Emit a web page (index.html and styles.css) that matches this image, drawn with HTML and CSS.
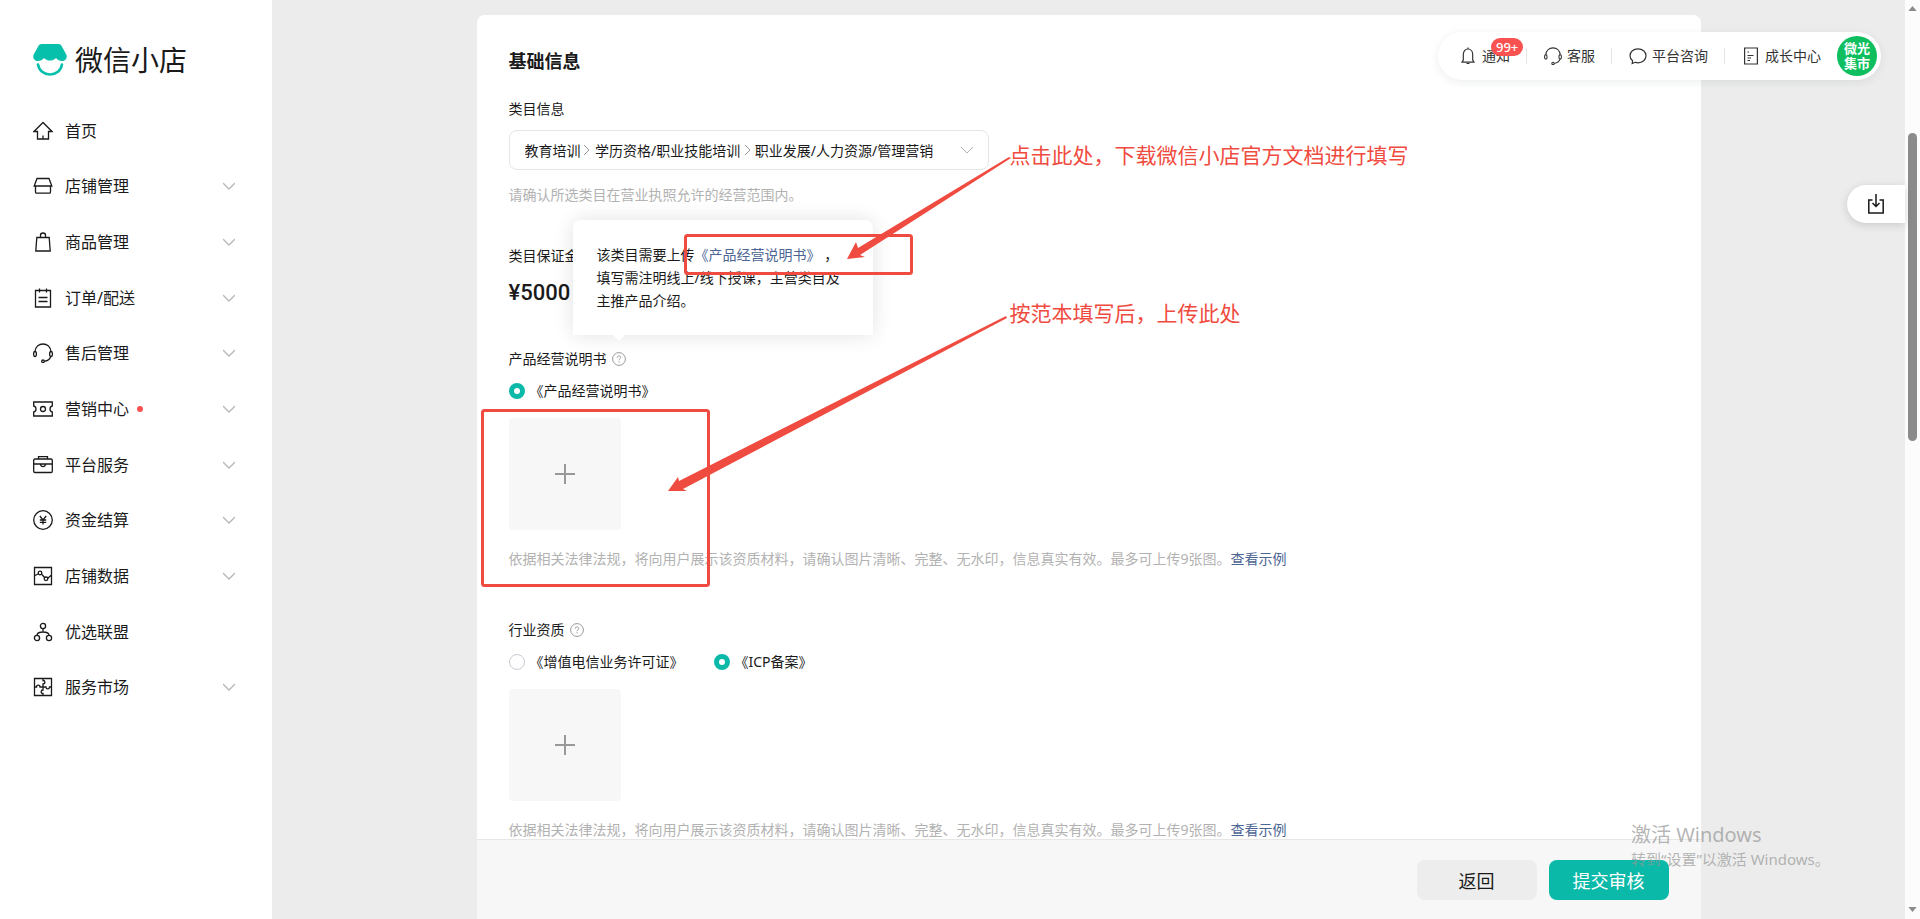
FILE: index.html
```html
<!DOCTYPE html>
<html lang="zh-CN">
<head>
    <meta charset="UTF-8">
    <title>微信小店</title>
    <link rel="stylesheet" href="styles.css">
</head>
<body>
    <div id="app">

        <aside id="sidebar">
            <a class="logo" href="#">
                <svg width="34" height="32" viewBox="0 0 34 32">
                    <path d="M8.500 0h17c1.400 0 2.500.8 3.100 2l4.700 8.500c1.400 3-.6 6.500-4.300 6.500-2.500 0-4.500-1.200-6-3-1.300 1.400-3.500 2.600-6 2.600s-4.700-1.200-6-2.600c-1.500 1.800-3.500 3-6 3C1.300 17-.7 13.500.7 10.500L5.400 2c.6-1.200 1.700-2 3.100-2z" fill="#07c0ab"/>
                    <path d="M5 20.500c1 6 6 10 12 10s11-4 12-10" fill="none" stroke="#07c0ab" stroke-width="2.600" stroke-linecap="round"/>
                </svg>
                <span>微信小店</span>
            </a>

            <ul class="menu">
                <li><a href="#">
                    <svg class="icon" viewBox="0 0 20 20"><path d="M10 1.500L1 10.500h3.500V18h11v-7.500H19zM10 14.500V18"/></svg>
                    首页
                </a></li>
                <li><a href="#">
                    <svg class="icon" viewBox="0 0 20 20"><path d="M4 2.500h12l2.800 7.500H1.200zM2.500 10v6c0 .8.4 1.200 1.200 1.200h12.600c.8 0 1.200-.4 1.200-1.200v-6"/></svg>
                    店铺管理
                    <svg class="arrow" viewBox="0 0 12 8"><path d="M0 1l6 6 6-6"/></svg>
                </a></li>
                <li><a href="#">
                    <svg class="icon" viewBox="0 0 20 20"><path d="M3.800 5.500h12.400l1 13.500H2.800zM7.500 5.500V3.200c0-1.300 1-2.200 2.500-2.200s2.500.9 2.500 2.200v2.300"/></svg>
                    商品管理
                    <svg class="arrow" viewBox="0 0 12 8"><path d="M0 1l6 6 6-6"/></svg>
                </a></li>
                <li><a href="#">
                    <svg class="icon" viewBox="0 0 20 20"><path d="M2.500 2.500h15V19h-15zM6.500.5v4M13.500.5v4M5.500 9.500h9M5.500 13.500h9"/></svg>
                    订单/配送
                    <svg class="arrow" viewBox="0 0 12 8"><path d="M0 1l6 6 6-6"/></svg>
                </a></li>
                <li><a href="#">
                    <svg class="icon" viewBox="0 0 20 20"><path d="M2 8.500C2.500 4 5.800 1 10 1s7.500 3 8 7.500M18 13c-1 3-3.500 5-6.500 5.200"/><ellipse cx="2" cy="11" rx="1.400" ry="2.500"/><ellipse cx="18" cy="11" rx="1.400" ry="2.500"/><circle cx="10" cy="18.300" r="1.300"/></svg>
                    售后管理
                    <svg class="arrow" viewBox="0 0 12 8"><path d="M0 1l6 6 6-6"/></svg>
                </a></li>
                <li><a href="#">
                    <svg class="icon" viewBox="0 0 20 20"><path d="M.7 3h18.600v4c-1.600.3-2.300 1.600-2.300 3s.7 2.700 2.300 3v4H.7v-4c1.600-.3 2.300-1.600 2.300-3S2.300 7.300.7 7z"/><circle cx="10" cy="10" r="2.500"/></svg>
                    营销中心
                    <i class="dot"></i>
                    <svg class="arrow" viewBox="0 0 12 8"><path d="M0 1l6 6 6-6"/></svg>
                </a></li>
                <li><a href="#">
                    <svg class="icon" viewBox="0 0 20 20"><path d="M5.500 4V1.700h9V4M2 4h16c.8 0 1.300.5 1.300 1.300v11c0 .8-.5 1.200-1.300 1.200H2c-.8 0-1.300-.4-1.300-1.200v-11C.7 4.500 1.200 4 2 4zM.7 9h18.600M7.500 9c.2 1.700 1.100 2.700 2.500 2.700s2.300-1 2.500-2.700"/></svg>
                    平台服务
                    <svg class="arrow" viewBox="0 0 12 8"><path d="M0 1l6 6 6-6"/></svg>
                </a></li>
                <li><a href="#">
                    <svg class="icon" viewBox="0 0 20 20"><circle cx="10" cy="10" r="9.300"/><path d="M6.800 6l3.200 4 3.200-4M10 10v4.500M6.800 10h6.400M6.800 12.300h6.400"/></svg>
                    资金结算
                    <svg class="arrow" viewBox="0 0 12 8"><path d="M0 1l6 6 6-6"/></svg>
                </a></li>
                <li><a href="#">
                    <svg class="icon" viewBox="0 0 20 20"><path d="M1.500 1.500h17v17h-17zM2 9.500l3-1.500M8.500 8l3.500 4M14.500 12.500l4-3.500"/><circle cx="7" cy="7" r="1.800"/><circle cx="13" cy="12.800" r="1.800"/></svg>
                    店铺数据
                    <svg class="arrow" viewBox="0 0 12 8"><path d="M0 1l6 6 6-6"/></svg>
                </a></li>
                <li><a href="#">
                    <svg class="icon" viewBox="0 0 20 20"><circle cx="10" cy="4" r="2.600"/><circle cx="4" cy="16" r="2.600"/><circle cx="16" cy="16" r="2.600"/><path d="M10 6.600V10M4 13.400c0-2 2.500-3.400 6-3.400s6 1.400 6 3.400"/></svg>
                    优选联盟
                </a></li>
                <li><a href="#">
                    <svg class="icon" viewBox="0 0 20 20"><path d="M1.500 1.500h17v17h-17zM10 1.500v2c2.500 0 2.500 3.500 0 3.500v3M18.500 10h-2c0 2.500-3.500 2.500-3.500 0h-3M10 18.500v-2c-2.500 0-2.500-3.500 0-3.500v-3M1.500 10h2c0-2.500 3.500-2.500 3.500 0h3"/></svg>
                    服务市场
                    <svg class="arrow" viewBox="0 0 12 8"><path d="M0 1l6 6 6-6"/></svg>
                </a></li>
            </ul>
        </aside>

        <main id="main">
            <form class="card">
                <div class="card-body">
                    <h2>基础信息</h2>

                    <div class="field">
                        <label class="label" for="category">类目信息</label>
                        <select id="category">
                            <option>教育培训&nbsp;&nbsp;&nbsp;&nbsp;学历资格/职业技能培训&nbsp;&nbsp;&nbsp;&nbsp;职业发展/人力资源/管理营销</option>
                        </select>
                        <p class="hint hint-select">请确认所选类目在营业执照允许的经营范围内。</p>
                    </div>

                    <div class="field">
                        <div class="label">类目保证金</div>
                        <div class="price">¥5000</div>
                    </div>

                    <div class="field field-upload">
                        <div class="label">
                            产品经营说明书
                            <span class="help">
                                <svg viewBox="0 0 14 14"><circle cx="7" cy="7" r="6.400"/><path d="M5.200 5.700c0-1.200.8-1.800 1.800-1.800s1.800.6 1.800 1.600c0 1.200-1.800 1.400-1.800 2.700M7 9.300v1.200"/></svg>
                                <span class="tooltip">该类目需要上传<a href="#">《产品经营说明书》</a>&nbsp;，填写需注明线上/线下授课，主营类目及主推产品介绍。</span>
                            </span>
                        </div>
                        <div class="radios">
                            <label><input type="radio" name="manual" checked>《产品经营说明书》</label>
                        </div>
                        <button type="button" class="upload" aria-label="上传产品经营说明书"><svg viewBox="0 0 20 20"><path d="M10 0v20M0 10h20"/></svg></button>
                        <p class="hint">依据相关法律法规，将向用户展示该资质材料，请确认图片清晰、完整、无水印，信息真实有效。最多可上传9张图。<a href="#">查看示例</a></p>
                    </div>

                    <div class="field field-upload">
                        <div class="label">
                            行业资质
                            <span class="help">
                                <svg viewBox="0 0 14 14"><circle cx="7" cy="7" r="6.400"/><path d="M5.200 5.700c0-1.200.8-1.800 1.800-1.800s1.800.6 1.800 1.600c0 1.200-1.800 1.400-1.800 2.700M7 9.300v1.200"/></svg>
                            </span>
                        </div>
                        <div class="radios">
                            <label><input type="radio" name="license">《增值电信业务许可证》</label>
                            <label><input type="radio" name="license" checked>《ICP备案》</label>
                        </div>
                        <button type="button" class="upload" aria-label="上传行业资质"><svg viewBox="0 0 20 20"><path d="M10 0v20M0 10h20"/></svg></button>
                        <p class="hint">依据相关法律法规，将向用户展示该资质材料，请确认图片清晰、完整、无水印，信息真实有效。最多可上传9张图。<a href="#">查看示例</a></p>
                    </div>
                </div>

                <div class="card-footer">
                    <button type="button" class="btn">返回</button>
                    <button type="button" class="btn btn-primary">提交审核</button>
                </div>

                <!-- 标注 -->
                <div class="notes">
                    <svg width="1224" height="600" viewBox="0 0 1224 600">
                        <rect x="208.500" y="220.500" width="226" height="38" rx="2"/>
                        <rect x="5.500" y="395.500" width="226" height="175" rx="2"/>
                        <polygon points="370,244 379,227 381,233 532,142 534,143 383,240 388,242"/>
                        <polygon points="191,476 201,462 202,466 529,301 530,303 206,474 210,476"/>
                    </svg>
                    <p class="note note-download">点击此处，下载微信小店官方文档进行填写</p>
                    <p class="note note-upload">按范本填写后，上传此处</p>
                </div>
            </form>

            <nav id="topbar">
                <a href="#">
                    <svg width="18" height="18" viewBox="-2 0 18 18"><path d="M1 15.200h12l-1.300-2.200V7.500C11.700 4.500 9.800 2 7 2S2.300 4.500 2.300 7.500V13zM7 2V.5M5.500 16.500h3"/></svg>
                    通知
                    <span class="badge">99+</span>
                </a>
                <a href="#">
                    <svg width="18" height="18" viewBox="0 0 20 20"><path d="M2 8.500C2.500 4 5.800 1 10 1s7.500 3 8 7.500M18 13c-1 3-3.500 5-6.500 5.200"/><ellipse cx="2" cy="11" rx="1.400" ry="2.500"/><ellipse cx="18" cy="11" rx="1.400" ry="2.500"/><circle cx="10" cy="18.300" r="1.300"/></svg>
                    客服
                </a>
                <a href="#">
                    <svg width="18" height="18" viewBox="0 0 18 18"><path d="M9 1.800c4.500 0 8 3 8 7s-3.500 7-8 7c-1 0-2-.2-2.900-.5L3.200 16.500l.4-2.700C2 12.500 1 10.800 1 8.800c0-4 3.500-7 8-7z"/></svg>
                    平台咨询
                </a>
                <a href="#">
                    <svg width="18" height="18" viewBox="-2 0 18 18"><path d="M.6 1h12.800v16H.6zM3.500 5h1.500M3.500 8.500h6M3.500 11h3.500M3.500 13.500h2.500"/></svg>
                    成长中心
                </a>
                <span class="avatar">微光<br>集市</span>
            </nav>

            <button type="button" id="download" aria-label="下载">
                <svg width="16" height="20" viewBox="0 0 16 20"><path d="M4.500 6H.8v13h14.400V6h-3.700M8 0v12M4.500 9L8 12.500 11.500 9"/></svg>
            </button>

            <div id="watermark">
                <p>激活 Windows</p>
                <p>转到“设置”以激活 Windows。</p>
            </div>
        </main>

        <div id="scrollbar">
            <svg viewBox="0 0 10 6"><path d="M5 0l5 6H0z"/></svg>
            <div class="track"><div class="thumb"></div></div>
            <svg viewBox="0 0 10 6"><path d="M5 6l5-6H0z"/></svg>
        </div>

    </div>
</body>
</html>
```
FILE: styles.css
```css
* {
    box-sizing: border-box;
}

body {
    margin: 0;
    font-family: "Noto Sans", "Noto Sans CJK SC", sans-serif;
    font-size: 14px;
    line-height: 22px;
    color: #1a1a1a;
    background-color: #ececec;
}

h2, p, ul {
    margin: 0;
    padding: 0;
}

a {
    color: #4c6593;
    text-decoration: none;
}

button, select, input {
    font-family: inherit;
    margin: 0;
}

svg {
    display: block;
    flex: none;
}

#app {
    display: flex;
    height: 100vh;
    overflow: hidden;
}

/* 左侧菜单 */
#sidebar {
    width: 272px;
    flex: none;
    background-color: #fff;
    padding: 40px 33px 0;
}

.logo {
    display: flex;
    align-items: center;
    gap: 8px;
    height: 40px;
    font-size: 28px;
    line-height: 40px;
    color: #1a1a1a;
}

.menu {
    display: flex;
    flex-direction: column;
    height: 612px;
    margin-top: 23px;
    list-style: none;
}

.menu li {
    flex: 1;
    display: flex;
}

.menu a {
    flex: 1;
    display: flex;
    align-items: center;
    gap: 12px;
    font-size: 16px;
    color: #1a1a1a;
}

.menu .icon {
    width: 20px;
    height: 20px;
    fill: none;
    stroke: #1a1a1a;
    stroke-width: 1.3;
}

.menu .arrow {
    width: 12px;
    height: 8px;
    margin-left: auto;
    margin-right: 4px;
    fill: none;
    stroke: #b8b8b8;
    stroke-width: 1.3;
}

.menu .dot {
    width: 6px;
    height: 6px;
    margin-left: -4px;
    border-radius: 50%;
    background-color: #fa5151;
}

/* 内容区 */
#main {
    position: relative;
    flex: 1;
    display: flex;
    justify-content: center;
    padding-top: 15px;
}

.card {
    position: relative;
    display: flex;
    flex-direction: column;
    width: 100%;
    max-width: 1224px;
    background-color: #fff;
    border-radius: 8px 8px 0 0;
}

.card-body {
    flex: 1;
    min-height: 0;
    overflow: hidden;
    padding: 30px 32px 0;
}

h2 {
    font-size: 18px;
    line-height: 32px;
    margin-bottom: 21px;
}

.field {
    margin-bottom: 39px;
}

.field-upload {
    margin-bottom: 49px;
}

.label {
    display: flex;
    align-items: center;
    gap: 5px;
    margin-bottom: 10px;
}

#category {
    display: block;
    width: 480px;
    height: 40px;
    padding: 0 15px;
    border: 1px solid #e5e5e5;
    border-radius: 8px;
    font-size: 14px;
    color: #1a1a1a;
    appearance: none;
    background-color: #fff;
    background-image:
        url("data:image/svg+xml,%3Csvg xmlns='http://www.w3.org/2000/svg' width='7' height='12'%3E%3Cpath d='M1 1l5 5-5 5' fill='none' stroke='%23999'/%3E%3C/svg%3E"),
        url("data:image/svg+xml,%3Csvg xmlns='http://www.w3.org/2000/svg' width='7' height='12'%3E%3Cpath d='M1 1l5 5-5 5' fill='none' stroke='%23999'/%3E%3C/svg%3E"),
        url("data:image/svg+xml,%3Csvg xmlns='http://www.w3.org/2000/svg' width='14' height='8'%3E%3Cpath d='M1 1l6 6 6-6' fill='none' stroke='%23b2b2b2'/%3E%3C/svg%3E");
    background-repeat: no-repeat;
    background-position: 73px center, 234px center, 450px center;
}

.hint {
    color: #b2b2b2;
    margin-top: 18px;
}

.hint-select {
    margin-top: 14px;
}

.price {
    font-family: Roboto, sans-serif;
    font-size: 22px;
    font-weight: 500;
    line-height: 32px;
}

.help {
    position: relative;
}

.help svg {
    width: 14px;
    height: 14px;
    fill: none;
    stroke: #999;
}

.tooltip {
    position: absolute;
    left: -39px;
    bottom: 31px;
    width: 300px;
    padding: 23px 24px;
    line-height: 23px;
    background-color: #fff;
    border-radius: 8px 8px 0 0;
    box-shadow: 0 0 20px rgba(0, 0, 0, 0.12);
}

.tooltip::after {
    content: "";
    position: absolute;
    left: 40px;
    top: 100%;
    border: 6px solid transparent;
    border-top-color: #fff;
    border-bottom: 0;
}

.radios {
    display: flex;
    gap: 30px;
    margin-bottom: 16px;
}

.radios label {
    display: flex;
    align-items: center;
    gap: 5px;
}

.radios input {
    width: 16px;
    height: 16px;
    appearance: none;
    border: 1px solid #c9cbd3;
    border-radius: 50%;
    background-color: #fff;
}

.radios input:checked {
    border: 5px solid #0bb9a8;
}

.upload {
    display: flex;
    align-items: center;
    justify-content: center;
    width: 112px;
    height: 112px;
    border: 0;
    border-radius: 4px;
    background-color: #f7f7f7;
}

.upload svg {
    width: 20px;
    height: 20px;
    stroke: #999;
    stroke-width: 2;
}

.card-footer {
    display: flex;
    flex: none;
    justify-content: flex-end;
    gap: 12px;
    height: 80px;
    padding: 20px 32px;
    border-top: 1px solid #e6e6e6;
    background-color: #f7f7f7;
}

.btn {
    width: 120px;
    height: 40px;
    border: 0;
    border-radius: 8px;
    font-size: 18px;
    color: #1a1a1a;
    background-color: #ededed;
}

.btn-primary {
    color: #fff;
    background-color: #0bb9a8;
}

/* 标注 */
.notes {
    position: absolute;
    top: 0;
    left: 0;
    pointer-events: none;
}

.notes rect {
    fill: none;
    stroke: #f04b40;
    stroke-width: 3;
}

.notes polygon {
    fill: #f04b40;
}

.note {
    position: absolute;
    left: 533px;
    font-size: 21px;
    line-height: 30px;
    white-space: nowrap;
    color: #f04b40;
}

.note-download {
    top: 125px;
}

.note-upload {
    top: 283px;
}

/* 右上角工具栏 */
#topbar {
    position: absolute;
    top: 32px;
    right: 24px;
    display: flex;
    align-items: center;
    height: 48px;
    padding: 0 4px 0 5px;
    border-radius: 24px;
    background-color: #fff;
    box-shadow: 0 2px 10px rgba(0, 40, 60, 0.08);
}

#topbar a {
    position: relative;
    display: flex;
    align-items: center;
    gap: 5px;
    padding: 0 16px;
    color: #333;
}

#topbar a + a {
    padding-left: 18px;
}

#topbar a + a::before {
    content: "";
    position: absolute;
    left: 0;
    width: 1px;
    height: 16px;
    background-color: #e5e5e5;
}

#topbar svg {
    fill: none;
    stroke: #333;
    stroke-width: 1.2;
}

.badge {
    position: absolute;
    top: -7px;
    left: 48px;
    height: 18px;
    padding: 0 5px;
    border-radius: 9px;
    font-size: 13px;
    font-weight: 500;
    line-height: 18px;
    color: #fff;
    background-color: #fa5151;
}

.avatar {
    width: 40px;
    height: 40px;
    padding-top: 5px;
    border-radius: 50%;
    font-size: 13px;
    font-weight: bold;
    line-height: 15px;
    text-align: center;
    color: #fff;
    background-color: #0fbf5f;
}

#download {
    position: absolute;
    top: 185px;
    right: 0;
    width: 58px;
    height: 38px;
    padding: 0 0 0 21px;
    border: 0;
    border-radius: 19px 0 0 19px;
    background-color: #fff;
    box-shadow: 0 2px 8px rgba(0, 0, 0, 0.15);
}

#download svg {
    fill: none;
    stroke: #1a1a1a;
    stroke-width: 1.5;
}

#watermark {
    position: absolute;
    right: 80px;
    bottom: 50px;
    width: 194px;
    font-size: 15px;
    line-height: 20px;
    white-space: nowrap;
    color: rgba(150, 150, 150, 0.7);
    pointer-events: none;
}

#watermark p:first-child {
    font-size: 20px;
    line-height: 28px;
}

/* 滚动条 */
#scrollbar {
    display: flex;
    flex-direction: column;
    align-items: center;
    width: 15px;
    flex: none;
    padding: 6px 0 7px;
    background-color: #fcfcfc;
}

#scrollbar svg {
    width: 9px;
    height: 5px;
    fill: #8b8b8b;
}

.track {
    flex: 1;
    padding-top: 122px;
}

.thumb {
    width: 9px;
    height: 308px;
    border-radius: 5px;
    background-color: #8b8b8b;
}
```
